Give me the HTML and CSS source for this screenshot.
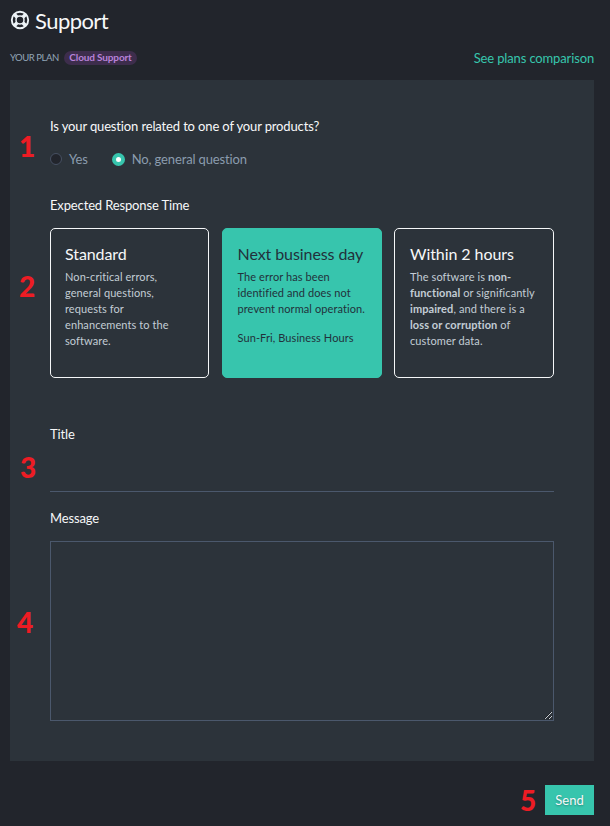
FILE: index.html
```html
<!DOCTYPE html>
<html lang="en">
<head>
<meta charset="utf-8">
<title>Support</title>
<link rel="stylesheet" href="styles.css">
</head>
<body>
<main class="page">
  <header class="heading">
    <svg class="heading-icon" viewBox="0 0 20 20" fill="none" stroke="currentColor">
      <circle cx="10" cy="10" r="8.2" stroke-width="1.9"/>
      <circle cx="10" cy="10" r="4" stroke-width="1.5"/>
      <path d="M4.2 4.2l3 3M15.8 4.2l-3 3M4.2 15.8l3-3M15.8 15.8l-3-3" stroke-width="3.6"/>
    </svg>
    <h1>Support</h1>
  </header>
  <div class="plan">
    <span class="plan-label">YOUR PLAN</span>
    <span class="plan-badge">Cloud Support</span>
    <a class="plan-link">See plans comparison</a>
  </div>
  <form class="panel">
    <span class="step step-1">1</span>
    <span class="step step-2">2</span>
    <span class="step step-3">3</span>
    <span class="step step-4">4</span>
    <div class="label">Is your question related to one of your products?</div>
    <div class="options">
      <label class="option"><span class="radio"></span><span>Yes</span></label>
      <label class="option"><span class="radio checked"></span><span>No, general question</span></label>
    </div>
    <div class="label">Expected Response Time</div>
    <div class="cards">
      <section class="card">
        <h2>Standard</h2>
        <p>Non-critical errors,<br>general questions,<br>requests for<br>enhancements to the<br>software.</p>
      </section>
      <section class="card selected">
        <h2>Next business day</h2>
        <p>The error has been<br>identified and does not<br>prevent normal operation.</p>
        <p class="hours">Sun-Fri, Business Hours</p>
      </section>
      <section class="card">
        <h2>Within 2 hours</h2>
        <p>The software is <b>non-<br>functional</b> or significantly<br><b>impaired</b>, and there is a<br><b>loss or corruption</b> of<br>customer data.</p>
      </section>
    </div>
    <div class="label">Title</div>
    <input class="title-input" type="text">
    <div class="label">Message</div>
    <div class="message"><textarea></textarea>
      <svg class="grip" viewBox="0 0 9 9" fill="none"><path d="M1 8L8 1M5 8L8 5" stroke="#c8ccd0"/><path d="M0 8L7 1M4 8L7 5" stroke="#15191d" stroke-width=".7"/></svg>
    </div>
  </form>
  <footer class="actions">
    <span class="step">5</span>
    <button class="send" type="button">Send</button>
  </footer>
</main>
</body>
</html>
```
FILE: styles.css
```css
* { box-sizing: border-box; }
body {
  margin: 0;
  background: #22252c;
  color: #f7f8f9;
  font: 13px/20px Lato, sans-serif;
  letter-spacing: -.14px;
  white-space: nowrap;
}
h1, h2, p { margin: 0; }
.page { width: 594px; height: 826px; padding-left: 10px; }
.heading { display: flex; align-items: center; height: 42px; gap: 5px; }
.heading-icon { width: 20px; height: 20px; margin-top: -2px; color: #eef4f8; }
h1 { font-size: 22px; line-height: 28px; font-weight: 400; letter-spacing: -.55px; }
.plan { display: flex; align-items: center; height: 38px; padding-bottom: 6px; }
.plan-label { color: #93a6b8; font-size: 9.5px; letter-spacing: -.45px; width: 54px; }
.plan-badge {
  display: flex;
  justify-content: center;
  width: 73px;
  height: 14px;
  border-radius: 7px;
  background: #3d2d4c;
  color: #b882d9;
  font-size: 10px;
  line-height: 13px;
  font-weight: 700;
}
.plan-link { margin-left: auto; color: #37c5ad; }
.panel {
  position: relative;
  height: 681px;
  padding: 36px 40px 0;
  background: #2c333a;
}
.label { height: 20px; }
.options { display: flex; gap: 24px; height: 20px; margin: 13px 0 26px; color: #8b9cae; }
.option { display: flex; align-items: center; gap: 7px; }
.radio {
  width: 12px;
  height: 12px;
  border: 1px solid #465062;
  border-radius: 50%;
  background: #22252c;
}
.checked { border: 4px solid #37c5ad; background: #fff; width: 13px; height: 13px; }
.cards { display: grid; grid-template-columns: 159px 160px 160px; justify-content: space-between; margin: 13px 0 46px; }
.card { height: 150px; padding: 14px; border: 1px solid #f5f7f8; border-radius: 5px; }
h2 { font-size: 16px; line-height: 22px; font-weight: 400; letter-spacing: -.08px; }
.card p { color: #c3cdd5; font-size: 11px; line-height: 16px; margin-top: 4px; letter-spacing: .09px; }
.selected { border-color: #37c5ad; background: #37c5ad; padding-left: 15px; }
.card:last-child { padding-left: 15px; }
.selected h2, .card.selected p { color: #22313b; }
.card .hours { margin-top: 13px; }
.title-input {
  display: block;
  width: 100%;
  height: 48px;
  margin-bottom: 16px;
  border: 0;
  border-bottom: 1px solid #4b586c;
  background: transparent;
}
.message { position: relative; margin-top: 13px; height: 180px; }
textarea {
  display: block;
  width: 100%;
  height: 100%;
  border: 1px solid #4b586c;
  background: transparent;
  resize: none;
}
.grip { position: absolute; right: 1px; bottom: 1px; width: 9px; height: 9px; }
.actions { display: flex; justify-content: flex-end; align-items: center; gap: 9px; margin-top: 24px; height: 30px; }
.send {
  width: 49px;
  height: 30px;
  padding: 0;
  border: 0;
  background: #37c5ad;
  color: #f7f8f9;
  font: 13px/30px Lato, sans-serif;
  text-shadow: 0 1px 2px rgba(0, 0, 0, .3);
}
.step { color: #ed1c24; font: 900 28px/28px Lato, sans-serif; }
.panel .step { position: absolute; }
.step-1 { left: 9px; top: 52px; }
.step-2 { left: 9px; top: 192px; }
.step-3 { left: 10px; top: 373px; }
.step-4 { left: 7px; top: 528px; }
```
